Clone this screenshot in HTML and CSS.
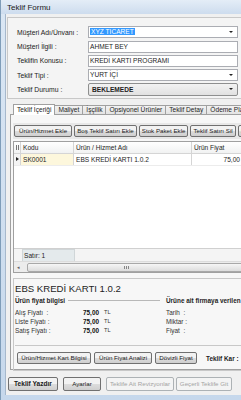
FILE: index.html
```html
<!DOCTYPE html>
<html lang="tr">
<head>
    <meta charset="UTF-8">
    <title>Teklif Formu</title>
    <link rel="stylesheet" href="styles.css">
</head>
<body>
    <div class="window">
        <div class="titlebar">Teklif Formu</div>
        <div class="client">

            <!-- Musteri bilgileri -->
            <div class="head-panel">
                <div class="field">
                    <label>Müşteri Adı/Ünvanı :</label>
                    <div class="input combo"><span class="selected">XYZ TİCARET</span><span class="arrow"></span></div>
                </div>
                <div class="field">
                    <label>Müşteri İlgili :</label>
                    <div class="input">AHMET BEY</div>
                </div>
                <div class="field">
                    <label>Teklifin Konusu :</label>
                    <div class="input">KREDİ KARTI PROGRAMI</div>
                </div>
                <div class="field">
                    <label>Teklif Tipi :</label>
                    <div class="input combo">YURT İÇİ<span class="arrow"></span></div>
                </div>
                <div class="field">
                    <label>Teklif Durumu :</label>
                    <div class="input combo dropdown">BEKLEMEDE<span class="arrow"></span></div>
                </div>
            </div>

            <ul class="tabs">
                <li class="active">Teklif İçeriği</li>
                <li>Maliyet</li>
                <li>İşçilik</li>
                <li>Opsiyonel Ürünler</li>
                <li>Teklif Detay</li>
                <li>Ödeme Planı</li>
            </ul>

            <div class="tab-page">
                <div class="toolbar">
                    <button class="btn">Ürün/Hizmet Ekle</button>
                    <button class="btn">Boş Teklif Satırı Ekle</button>
                    <button class="btn">Stok Paket Ekle</button>
                    <button class="btn">Teklif Satırı Sil</button>
                    <button class="btn">Satır</button>
                </div>

                <div class="grid">
                    <div class="grid-head">
                        <div class="cell ind"><span class="grip"></span></div>
                        <div class="cell code">Kodu</div>
                        <div class="cell name">Ürün / Hizmet Adı</div>
                        <div class="cell price">Ürün Fiyat</div>
                    </div>
                    <div class="grid-row">
                        <div class="cell ind"><span class="pointer"></span></div>
                        <div class="cell code current">SK0001</div>
                        <div class="cell name">EBS KREDİ KARTI 1.0.2</div>
                        <div class="cell price num">75,00</div>
                    </div>
                    <div class="grid-body"></div>
                    <div class="grid-foot"><span class="count">Satır: 1</span></div>
                    <div class="hscroll">
                        <span class="scroll-btn">&#9666;</span>
                        <span class="thumb"><span class="thumb-grip"></span></span>
                    </div>
                </div>

                <div class="detail">
                    <div class="detail-title">EBS KREDİ KARTI 1.0.2</div>
                    <div class="detail-cols">
                        <div class="detail-col left">
                            <div class="group-title"><span>Ürün fiyat bilgisi</span><span class="rule"></span></div>
                            <div class="info-row"><span class="key">Alış Fiyatı&nbsp;&nbsp;:</span><b>75,00</b><span class="cur">TL</span></div>
                            <div class="info-row"><span class="key">Liste Fiyatı :</span><b>75,00</b><span class="cur">TL</span></div>
                            <div class="info-row"><span class="key">Satış Fiyatı :</span><b>75,00</b><span class="cur">TL</span></div>
                        </div>
                        <div class="detail-col right">
                            <div class="group-title"><span>Ürüne ait firmaya verilen son fiyat</span></div>
                            <div class="info-row"><span class="key short">Tarih&nbsp;&nbsp;:</span></div>
                            <div class="info-row"><span class="key short">Miktar :</span></div>
                            <div class="info-row"><span class="key short">Fiyat&nbsp;&nbsp;:</span></div>
                        </div>
                    </div>
                    <div class="detail-actions">
                        <button class="btn btn-card">Ürün/Hizmet Kart Bilgisi</button>
                        <button class="btn btn-analysis">Ürün Fiyat Analizi</button>
                        <button class="btn btn-fx">Dövizli Fiyat</button>
                        <span class="profit">Teklif Kar :</span>
                    </div>
                </div>
            </div>

            <div class="footer-buttons">
                <button class="btn big bold btn-print">Teklif Yazdır</button>
                <button class="btn big btn-settings">Ayarlar</button>
                <button class="btn big btn-revisions" disabled>Teklife Ait Revizyonlar</button>
                <button class="btn big btn-goto" disabled>Geçerli Teklife Git</button>
            </div>
        </div>
    </div>
</body>
</html>
```

FILE: styles.css
```css
html, body {
    margin: 0;
    padding: 0;
    width: 241px;
    height: 400px;
    overflow: hidden;
    background: #ffffff;
}

body {
    font-family: "Liberation Sans", Arial, sans-serif;
    font-size: 7px;
    color: #1e1e1e;
}

.window {
    width: 262px;
    height: 400px;
    background: linear-gradient(#dbe7f4, #c6d8ec);
    border-left: 1px solid #7f9db9;
    box-sizing: border-box;
    display: flex;
    flex-direction: column;
}

.titlebar {
    height: 14px;
    line-height: 15px;
    padding-left: 6px;
    font-size: 8px;
    color: #1a1a1a;
    background: linear-gradient(#e4edf7, #cddcee);
}

.client {
    margin: 0 0 5px 4px;
    flex: 1;
    background: #f0f0f0;
    border-left: 1px solid #a6b8cc;
    display: flex;
    flex-direction: column;
    overflow: hidden;
}

/* Header panel */
.head-panel {
    margin: 3px 0 0 1px;
    height: 82px;
    flex: none;
    border: 1px solid #c8c8c8;
    border-right: none;
    background: #f4f4f4;
    padding: 8px 0 0 9px;
    box-sizing: border-box;
    display: flex;
    flex-direction: column;
    gap: 2px;
}

.field {
    display: flex;
    align-items: center;
    height: 12.4px;
}

.field label {
    width: 71px;
    flex: none;
    color: #222;
    font-size: 6.8px;
}

.input {
    width: 150px;
    height: 12px;
    box-sizing: border-box;
    border: 1px solid #abadb3;
    background: #fff;
    line-height: 10px;
    padding-left: 1px;
    position: relative;
    white-space: nowrap;
    font-size: 6.6px;
}

.combo .arrow {
    position: absolute;
    right: 4px;
    top: 4px;
    border-left: 2px solid transparent;
    border-right: 2px solid transparent;
    border-top: 2px solid #222;
}

.selected {
    background: #3399ff;
    color: #fff;
    padding: 0 1px;
}

.dropdown {
    height: 13px;
    line-height: 11px;
    font-weight: bold;
    padding-left: 3px;
    border-color: #8e8f8f;
    border-radius: 2px;
    background: linear-gradient(#f2f2f2, #e1e1e1);
}

/* Tabs */
.tabs {
    list-style: none;
    margin: 5px 0 0 7px;
    padding: 0;
    display: flex;
    align-items: flex-end;
    height: 10px;
    flex: none;
    position: relative;
    z-index: 1;
    font-size: 6.6px;
}

.tabs li {
    height: 8px;
    line-height: 8px;
    padding: 0 3px;
    border: 1px solid #a0a0a0;
    border-bottom: none;
    border-left: none;
    background: linear-gradient(#f2f2f2, #e3e3e3);
    white-space: nowrap;
}

.tabs li.active {
    height: 10px;
    line-height: 10px;
    background: #fff;
    padding: 0 3px;
    margin-bottom: -1px;
    border-left: 1px solid #a0a0a0;
}

.tab-page {
    margin-left: 4px;
    height: 256px;
    flex: none;
    border: 1px solid #a0a0a0;
    border-right: none;
    background: #f7f7f7;
    padding: 7px 0 0 2px;
    box-sizing: border-box;
}

/* Buttons */
.btn {
    font-family: inherit;
    font-size: 6.2px;
    height: 12px;
    padding: 0 2px;
    border: 1px solid #707070;
    border-radius: 2px;
    background: linear-gradient(#f2f2f2 50%, #dddddd 50%, #cfcfcf);
    color: #1a1a1a;
    white-space: nowrap;
    line-height: 10px;
    flex: none;
}

.btn:disabled {
    color: #a3a3a3;
    border-color: #adb2b5;
    background: #f4f4f4;
}

.toolbar {
    height: 16px;
    background: #e8e8e8;
    display: flex;
    align-items: center;
    gap: 2px;
    padding-left: 1px;
    margin-top: 1px;
}

.toolbar .btn:first-child {
    padding: 0 4px;
}

/* Grid */
.grid {
    margin-top: 2px;
    height: 130px;
    border: 1px solid #a0a0a0;
    border-right: none;
    background: #fff;
    display: flex;
    flex-direction: column;
    font-size: 6.6px;
}

.grid-head, .grid-row {
    display: flex;
    height: 11px;
    line-height: 11px;
}

.grid-head {
    background: linear-gradient(#ffffff, #f1f2f2);
    border-bottom: 1px solid #d5d5d5;
}

.cell {
    box-sizing: border-box;
    padding-left: 2px;
    border-right: 1px solid #d5d5d5;
    white-space: nowrap;
    flex: none;
}

.ind { width: 7px; padding: 0; position: relative; }
.code { width: 53px; }
.name { width: 118px; }
.price { width: 60px; }
.num { text-align: right; padding-right: 11px; }

.grid-row {
    border-bottom: 1px solid #ececec;
}

.grid-row .ind { background: #f4f4f4; }

.current {
    background: #fdf7dc;
}

.grip {
    position: absolute;
    left: 2px;
    top: 3px;
    width: 3px;
    height: 5px;
    background: repeating-linear-gradient(90deg, #777 0 1px, transparent 1px 2px);
}

.pointer {
    position: absolute;
    left: 2px;
    top: 3px;
    border-top: 2.5px solid transparent;
    border-bottom: 2.5px solid transparent;
    border-left: 3px solid #222;
}

.grid-body {
    flex: 1;
}

.grid-foot {
    height: 12px;
    border-top: 1px solid #d0d0d0;
    background: #f4f4f4;
    padding-left: 8px;
    display: flex;
}

.count {
    width: 50px;
    background: #e4eaec;
    border: 1px solid #d0d6d8;
    border-bottom: none;
    line-height: 11px;
    padding-left: 1px;
}

.hscroll {
    height: 10px;
    background: #ececec;
    border-top: 1px solid #dcdcdc;
    display: flex;
    align-items: center;
}

.scroll-btn {
    width: 9px;
    font-size: 5px;
    color: #606060;
    text-align: center;
}

.thumb {
    flex: 1;
    height: 7px;
    margin-left: 4px;
    border: 1px solid #a8a8a8;
    border-radius: 2px;
    background: linear-gradient(#f6f6f6, #dcdcdc);
    position: relative;
}

.thumb-grip {
    position: absolute;
    left: 96px;
    top: 2px;
    width: 5px;
    height: 3px;
    background: repeating-linear-gradient(90deg, #888 0 1px, transparent 1px 2px);
}

/* Detail panel */
.detail {
    margin-top: 5px;
    height: 93px;
    border: 1px solid #c8c8c8;
    border-right: none;
    box-sizing: border-box;
    padding: 3px 0 0 1px;
    font-size: 6.4px;
}

.detail-title {
    font-size: 9.6px;
    height: 13px;
    line-height: 13px;
}

.detail-cols {
    display: flex;
    height: 50px;
    border-bottom: 1px solid #c8c8c8;
}

.detail-col.left {
    width: 151px;
    flex: none;
}

.group-title {
    font-weight: bold;
    display: flex;
    align-items: center;
    height: 11px;
    margin-bottom: 2px;
    white-space: nowrap;
}

.rule {
    flex: 1;
    height: 1px;
    background: #b8b8b8;
    margin: 0 6px 0 3px;
}

.info-row {
    height: 9px;
    line-height: 9px;
    display: flex;
    color: #333;
}

.key {
    width: 68px;
}

.key.short {
    width: 30px;
}

.info-row b {
    color: #111;
    width: 20px;
}

.cur {
    font-size: 5.6px;
    margin-left: 1px;
}

.detail-actions {
    display: flex;
    align-items: center;
    gap: 3px;
    height: 24px;
    padding-left: 2px;
}

.btn-card { width: 74px; }
.btn-analysis { width: 58px; }
.btn-fx { width: 42px; }

.profit {
    font-weight: bold;
    margin-left: 6px;
    white-space: nowrap;
}

/* Alt butonlar */
.footer-buttons {
    display: flex;
    align-items: center;
    padding: 7px 0 0 2px;
}

.btn.big {
    height: 14px;
    padding: 0;
    margin-right: 5px;
}

.btn-print { width: 50px; }
.btn-settings { width: 38px; }
.btn-revisions { width: 68px; margin-right: 2px !important; }
.btn-goto { width: 56px; }

.bold {
    font-weight: bold;
    font-size: 6.6px;
}
```
